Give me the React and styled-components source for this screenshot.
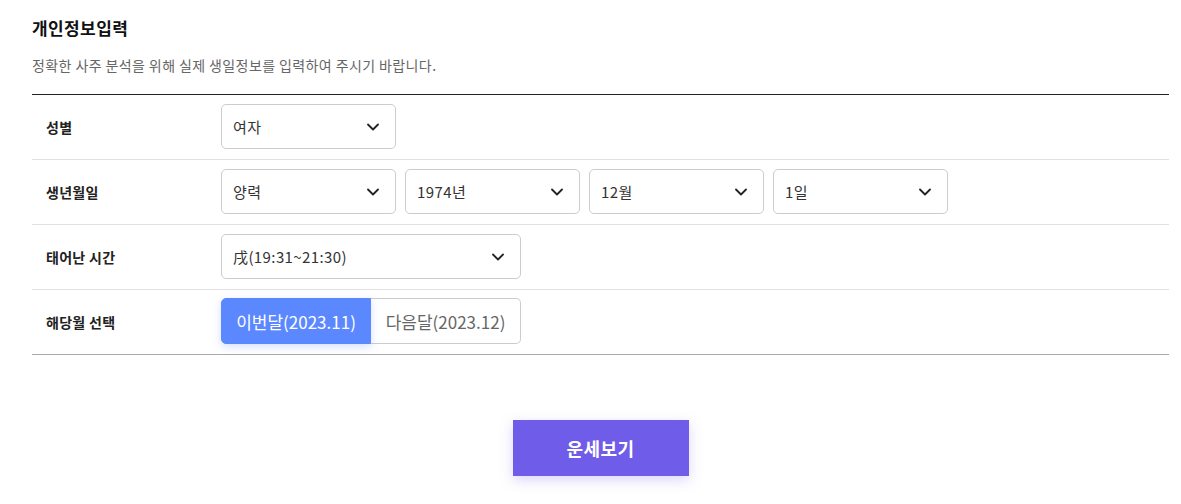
import React from "react";
import styled, { createGlobalStyle } from "styled-components";

const GlobalStyle = createGlobalStyle`
  body {
    margin: 0;
    background: #fff;
    font-family: "Noto Sans CJK KR", "Noto Sans", sans-serif;
    color: #222;
  }
`;

const Chevron = () => (
  <svg width="12" height="8" viewBox="0 0 12 8" fill="none">
    <path d="M1 1.5L6 6.5L11 1.5" stroke="#222" strokeWidth="1.8" strokeLinecap="round" strokeLinejoin="round" />
  </svg>
);

const Select = ({ value, width }) => (
  <SelectBox width={width}>
    <span>{value}</span>
    <Chevron />
  </SelectBox>
);

const App = () => {
  return (
    <>
      <GlobalStyle />
      <Wrapper>
        <Title>개인정보입력</Title>
        <Desc>정확한 사주 분석을 위해 실제 생일정보를 입력하여 주시기 바랍니다.</Desc>

        <Table>
          <Row>
            <Label>성별</Label>
            <Fields>
              <Select value="여자" />
            </Fields>
          </Row>
          <Row>
            <Label>생년월일</Label>
            <Fields>
              <Select value="양력" />
              <Select value="1974년" />
              <Select value="12월" />
              <Select value="1일" />
            </Fields>
          </Row>
          <Row>
            <Label>태어난 시간</Label>
            <Fields>
              <Select value="戌(19:31~21:30)" width={300} />
            </Fields>
          </Row>
          <Row last>
            <Label>해당월 선택</Label>
            <Fields>
              <Toggle>
                <ToggleButton active>이번달(2023.11)</ToggleButton>
                <ToggleButton>다음달(2023.12)</ToggleButton>
              </Toggle>
            </Fields>
          </Row>
        </Table>

        <Actions>
          <SubmitButton>운세보기</SubmitButton>
        </Actions>
      </Wrapper>
    </>
  );
};

/* Styled Components */
const Wrapper = styled.div`
  padding: 14px 12px 0 32px;
`;

const Title = styled.h2`
  margin: 0;
  font-size: 17px;
  font-weight: 700;
  letter-spacing: 0.4px;
  line-height: 28px;
  color: #111;
`;

const Desc = styled.p`
  margin: 13px 0 0;
  font-size: 14px;
  letter-spacing: 0.4px;
  line-height: 20px;
  color: #666;
`;

const Table = styled.div`
  margin-top: 19px;
  border-top: 1px solid #222;
  border-bottom: 1px solid #aaa;
`;

const Row = styled.div`
  display: flex;
  align-items: center;
  height: 64px;
  border-bottom: ${({ last }) => (last ? "none" : "1px solid #e0e0e0")};
`;

const Label = styled.div`
  width: 175px;
  padding-left: 14px;
  font-size: 14px;
  letter-spacing: 0.3px;
  font-weight: 700;
  color: #222;
`;

const Fields = styled.div`
  display: flex;
  gap: 9px;
  align-self: flex-start;
  padding-top: 9px;
`;

const SelectBox = styled.div`
  box-sizing: border-box;
  width: ${({ width }) => width || 175}px;
  height: 45px;
  display: flex;
  align-items: center;
  justify-content: space-between;
  padding: 0 16px 0 11px;
  border: 1px solid #ccc;
  border-radius: 5px;
  font-size: 15px;
  letter-spacing: 0.4px;
  color: #333;
`;

const Toggle = styled.div`
  display: flex;
  height: 46px;
  margin-top: -1px;
`;

const ToggleButton = styled.button`
  box-sizing: border-box;
  width: 150px;
  height: 46px;
  border: 1px solid ${({ active }) => (active ? "#5b88ff" : "#ccc")};
  border-left: ${({ active }) => (active ? "1px solid #5b88ff" : "none")};
  border-radius: ${({ active }) => (active ? "5px 0 0 5px" : "0 5px 5px 0")};
  background: ${({ active }) => (active ? "#5b88ff" : "#fff")};
  color: ${({ active }) => (active ? "#fff" : "#666")};
  box-shadow: ${({ active }) => (active ? "0 3px 8px rgba(91, 136, 255, 0.25)" : "none")};
  font-family: "Noto Sans CJK KR", "Noto Sans", sans-serif;
  font-size: 17px;
  padding: 0;
  cursor: pointer;
  position: relative;
  z-index: ${({ active }) => (active ? 1 : 0)};
`;

const Actions = styled.div`
  display: flex;
  justify-content: center;
  padding: 65px 0 28px;
`;

const SubmitButton = styled.button`
  width: 176px;
  height: 56px;
  border: 0;
  background: #6f5ce9;
  color: #fff;
  font-family: "Noto Sans CJK KR", "Noto Sans", sans-serif;
  font-size: 18px;
  font-weight: 700;
  letter-spacing: 0.5px;
  box-shadow: 0 4px 12px rgba(111, 92, 233, 0.25);
  cursor: pointer;
`;

export default App;
